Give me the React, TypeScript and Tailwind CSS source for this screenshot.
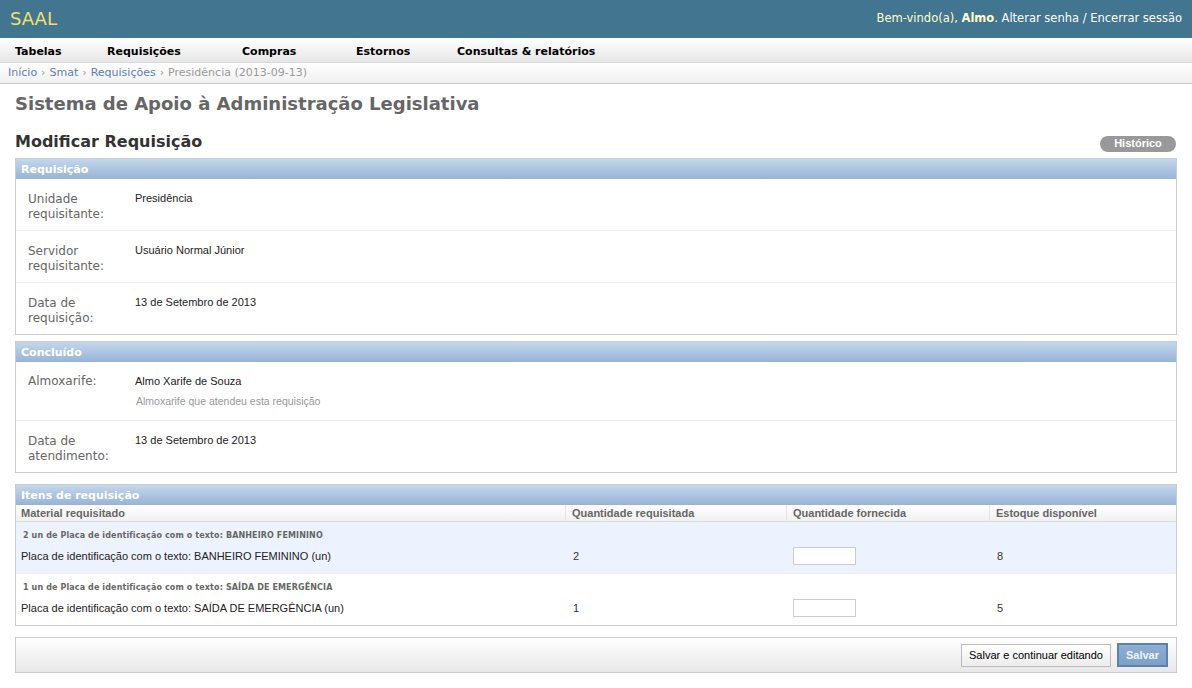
import React from 'react'

const dv = { fontFamily: '"DejaVu Sans", Verdana, sans-serif' }
const ar = { fontFamily: '"Liberation Sans", Arial, sans-serif' }

function FieldsetHeader({ title }: { title: string }) {
  return (
    <div className="h-[20px] bg-gradient-to-b from-[#c4d7ec] to-[#97b3d6] px-[5px] flex items-center text-[11px] font-bold text-white leading-none">
      {title}
    </div>
  )
}

function Row({ label, value, help, last }: { label: string; value: string; help?: string; last?: boolean }) {
  return (
    <div className={'flex pl-[12px] pt-[11px] ' + (help ? 'pb-[12px] ' : 'pb-[8px] ') + (last ? '' : 'border-b border-[#eee]')}>
      <div className={'w-[107px] pr-[10px] text-[12px] leading-[15px] text-[#666] ' + (help ? 'pt-[1px]' : 'pt-[2px]')}>{label}</div>
      <div className="flex flex-col pt-[1px]" style={ar}>
        <div className="text-[11px] leading-[14px] text-[#222]">{value}</div>
        {help && <div className="mt-[6px] pl-px text-[10.5px] leading-[14px] text-[#999]">{help}</div>}
      </div>
    </div>
  )
}

const items = [
  { title: '2 un de Placa de identificação com o texto: BANHEIRO FEMININO', name: 'Placa de identificação com o texto: BANHEIRO FEMININO (un)', qty: '2', stock: '8', alt: true },
  { title: '1 un de Placa de identificação com o texto: SAÍDA DE EMERGÊNCIA', name: 'Placa de identificação com o texto: SAÍDA DE EMERGÊNCIA (un)', qty: '1', stock: '5', alt: false },
]

const cols = 'grid grid-cols-[550px_221px_203px_1fr]'

export default function App() {
  return (
    <div className="w-[1192px] h-[688px] bg-white overflow-hidden text-[#333]" style={dv}>
      <div className="h-[38px] bg-[#417590] flex items-center justify-between px-[10px]">
        <span className="text-[18px] text-[#f3e06a] leading-none">SAAL</span>
        <span className="text-[11.5px] text-white">
          <span className="text-[#ffffcc]">Bem-vindo(a), <b>Almo</b>.</span> Alterar senha / Encerrar sessão
        </span>
      </div>

      <div className="h-[25px] pt-[4px] bg-gradient-to-b from-white to-[#e6e6e6] border-b border-[#d8d8d8] flex items-center pl-[15px] text-[11px] font-bold text-black">
        <span className="w-[92px]">Tabelas</span>
        <span className="w-[135px]">Requisições</span>
        <span className="w-[114px]">Compras</span>
        <span className="w-[101px]">Estornos</span>
        <span>Consultas &amp; relatórios</span>
      </div>

      <div className="h-[21px] pt-[1px] bg-gradient-to-b from-white to-[#f0f0f0] border-b border-[#ccc] flex items-center pl-[8px] text-[11px] text-[#999]">
        <span className="text-[#5b80b2]">Início</span>
        <span className="mx-[4px]">›</span>
        <span className="text-[#5b80b2]">Smat</span>
        <span className="mx-[4px]">›</span>
        <span className="text-[#5b80b2]">Requisições</span>
        <span className="mx-[4px]">›</span>
        <span>Presidência (2013-09-13)</span>
      </div>

      <div className="px-[15px]">
        <h1 className="pt-[10px] text-[18px] leading-[20px] font-bold text-[#666]">Sistema de Apoio à Administração Legislativa</h1>

        <div className="mt-[18px] h-[20px] flex items-center justify-between">
          <h2 className="text-[16px] font-bold text-[#333] leading-none">Modificar Requisição</h2>
          <span className="h-[16px] w-[76px] mt-[3px] mr-px rounded-full bg-[#999] text-white text-[11px] font-bold flex items-center justify-center leading-none" style={ar}>
            Histórico
          </span>
        </div>

        <div className="mt-[6px] border border-[#ccc]">
          <FieldsetHeader title="Requisição" />
          <Row label="Unidade requisitante:" value="Presidência" />
          <Row label="Servidor requisitante:" value="Usuário Normal Júnior" />
          <Row label="Data de requisição:" value="13 de Setembro de 2013" last />
        </div>

        <div className="mt-[6px] border border-[#ccc]">
          <FieldsetHeader title="Concluído" />
          <Row label="Almoxarife:" value="Almo Xarife de Souza" help="Almoxarife que atendeu esta requisição" />
          <Row label="Data de atendimento:" value="13 de Setembro de 2013" last />
        </div>

        <div className="mt-[11px] border border-[#ccc]">
          <FieldsetHeader title="Itens de requisição" />
          <div className={cols + ' h-[17px] bg-gradient-to-b from-white to-[#f0f0f0] border-b border-[#ddd] text-[11px] font-bold text-[#666] items-center'} style={ar}>
            <div className="pl-[5px] h-full flex items-center border-r border-[#e4e4e4]">Material requisitado</div>
            <div className="pl-[6px] h-full flex items-center border-r border-[#e4e4e4]">Quantidade requisitada</div>
            <div className="pl-[6px] h-full flex items-center border-r border-[#e4e4e4]">Quantidade fornecida</div>
            <div className="pl-[6px] h-full flex items-center">Estoque disponível</div>
          </div>
          {items.map((it, i) => (
            <div key={i} className={(it.alt ? 'bg-[#edf3fe] ' : 'bg-white ') + 'pt-[9px] pb-[8px] ' + (i === 0 ? 'border-b border-[#eee]' : '')}>
              <div className="pl-[7px] text-[8px] leading-[10px] font-bold text-[#666] tracking-[0.12px]">{it.title}</div>
              <div className={cols + ' mt-[6px] h-[18px] items-center text-[11px] text-[#222]'} style={ar}>
                <div className="pl-[5px]">{it.name}</div>
                <div className="pl-[7px] text-[#333]">{it.qty}</div>
                <div className="pl-[6px]">
                  <div className="w-[63px] h-[18px] -mt-px bg-white border border-[#ccc]" />
                </div>
                <div className="pl-[7px] text-[#333]">{it.stock}</div>
              </div>
            </div>
          ))}
        </div>

        <div className="mt-[11px] h-[36px] border border-[#ccc] bg-gradient-to-b from-white to-[#e8e8e8] flex items-center justify-end gap-[6px] pr-[8px]" style={ar}>
          <button className="h-[23px] px-[7px] border border-[#bbb] bg-gradient-to-b from-white to-[#ececec] text-[11px] text-black">
            Salvar e continuar editando
          </button>
          <button className="h-[24px] px-[7px] border-2 border-[#5b80b2] bg-gradient-to-b from-[#8eafd3] to-[#7ca0c7] text-[11px] font-bold text-[#eef3f9]">
            Salvar
          </button>
        </div>
      </div>
    </div>
  )
}
